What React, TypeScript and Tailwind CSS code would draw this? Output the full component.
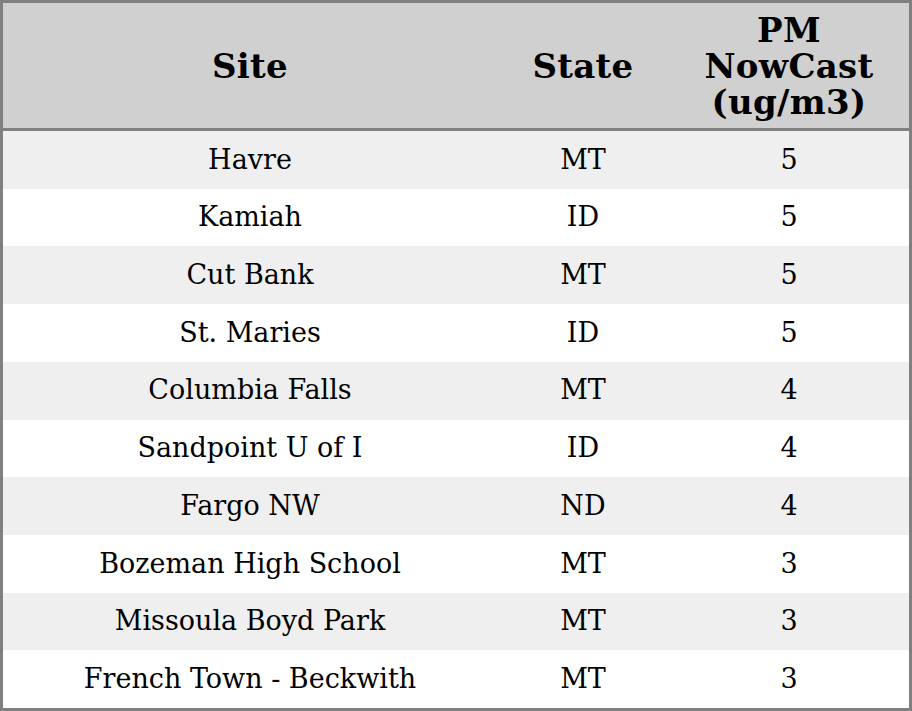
const rows: [string, string, number][] = [
  ["Havre", "MT", 5],
  ["Kamiah", "ID", 5],
  ["Cut Bank", "MT", 5],
  ["St. Maries", "ID", 5],
  ["Columbia Falls", "MT", 4],
  ["Sandpoint U of I", "ID", 4],
  ["Fargo NW", "ND", 4],
  ["Bozeman High School", "MT", 3],
  ["Missoula Boyd Park", "MT", 3],
  ["French Town - Beckwith", "MT", 3],
];

export default function App() {
  return (
    <div
      className="flex h-[711px] w-[912px] flex-col border-[3px] border-[#808080] bg-white text-black"
      style={{ fontFamily: '"DejaVu Serif", serif' }}
    >
      <div className="flex h-[128px] shrink-0 items-center border-b-[3px] border-[#808080] bg-[#d0d0d0] text-[34px] font-bold leading-[36px] tracking-[0.3px]">
        <div className="w-[494px] text-center">Site</div>
        <div className="w-[172px] text-center">State</div>
        <div className="flex-1 text-center">
          PM
          <br />
          NowCast
          <br />
          (ug/m3)
        </div>
      </div>
      <div className="flex flex-1 flex-col text-[27px]">
        {rows.map(([site, state, pm], i) => (
          <div
            key={site}
            className={`flex flex-1 items-center ${i % 2 === 0 ? "bg-[#efefef]" : "bg-white"}`}
          >
            <div className="w-[494px] text-center">{site}</div>
            <div className="w-[172px] text-center">{state}</div>
            <div className="flex-1 text-center">{pm}</div>
          </div>
        ))}
      </div>
    </div>
  );
}
